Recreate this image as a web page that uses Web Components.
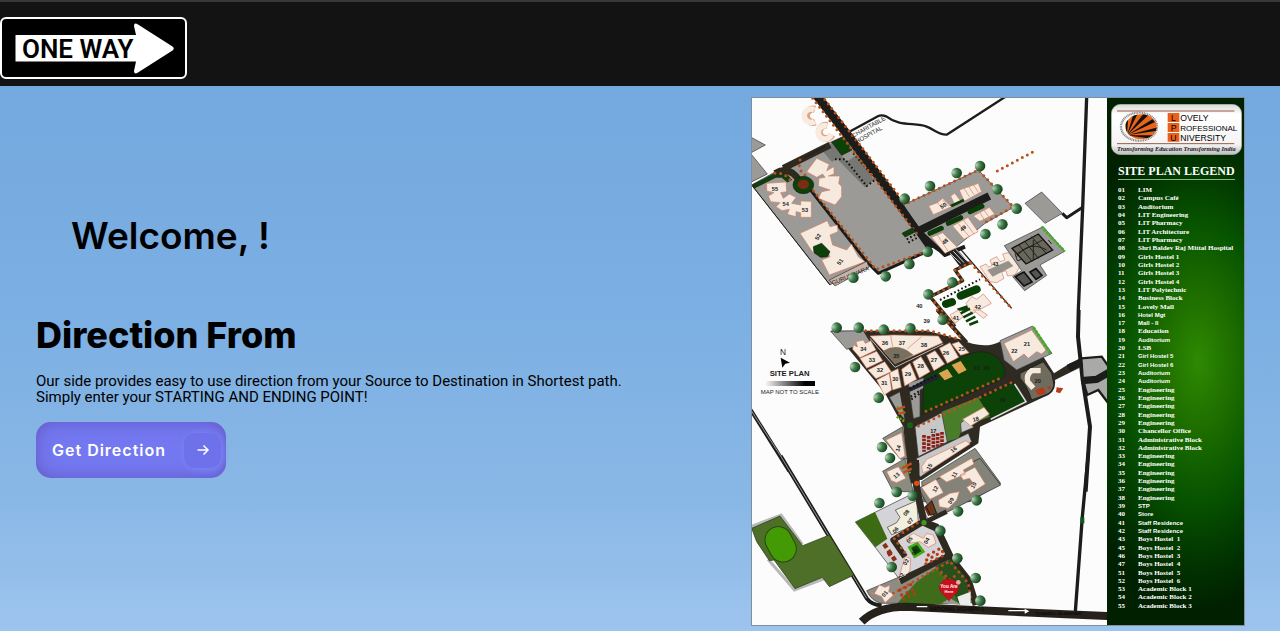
<!DOCTYPE html>
<html lang="en">
<head>
<meta charset="utf-8">
<meta name="viewport" content="width=device-width, initial-scale=1">
<title>Get Direction</title>
<style>
  html { min-height: 100%; background: #7db0e4; }
  body {
    margin: 0; min-height: 100vh; font-family: Inter, "Liberation Sans", sans-serif; color: #000;
    background: linear-gradient(#74a9df 86px, #7cafe3 50%, #8ab8e6 80%, #9dc4ee);
  }
</style>
</head>
<body>
<direction-app></direction-app>

<template id="t-app">
  <style>
    :host { display: block; }
    main { display: grid; grid-template-columns: minmax(0, 1fr) auto; padding: 11px 35px 5px 36px; column-gap: 36px; }
    .intro { padding-top: 117px; }
    h1 { margin: 0 0 55px 35px; font-size: 37px; line-height: 44px; font-weight: 600; }
    h2 { margin: 0 0 16px; font-size: 36px; line-height: 44px; font-weight: 800; }
    p { margin: 0 0 17px; font: 15px/16px Roboto, "Liberation Sans", sans-serif; }
    .plan { display: flex; outline: 1px solid #7d8f9c; outline-offset: -1px; }
  </style>
  <site-header><one-way-sign></one-way-sign></site-header>
  <main>
    <section class="intro">
      <h1>Welcome, !</h1>
      <h2>Direction From</h2>
      <p>Our side provides easy to use direction from your Source to Destination in Shortest path.<br>Simply enter your STARTING AND ENDING POINT!</p>
      <arrow-button>Get Direction</arrow-button>
    </section>
    <section class="plan">
      <campus-map></campus-map>
      <map-legend><university-card slot="logo"></university-card>SITE PLAN LEGEND</map-legend>
    </section>
  </main>
</template>

<template id="t-header">
  <style>
    :host { display: block; box-sizing: border-box; background: #131313; border-top: 2px solid #383838; padding: 15px 0 7px; }
    header { display: flex; }
  </style>
  <header><slot></slot></header>
</template>

<template id="t-sign">
  <style>
    :host { display: block; }
    a, svg { display: block; }
    text { font: 600 26px Roboto, "Liberation Sans", sans-serif; }
  </style>
  <a href="#" aria-label="Home">
    <svg width="187" height="62" viewBox="0 0 187 62">
      <rect x="1" y="1" width="185" height="60" rx="5" fill="#000" stroke="#fff" stroke-width="2"/>
      <path d="M15.5 18H136L134 9Q134 5 138 7.5L172.500 29.5Q175 31.5 172.5 33.5L138 55.5Q134 58 134 54L136 44.5H15.5Z" fill="#fff"/>
      <text x="22" y="41" fill="#000">ONE WAY</text>
    </svg>
  </a>
</template>

<template id="t-button">
  <style>
    :host { display: block; }
    button {
      display: flex; align-items: center; gap: 18px; height: 56px; padding: 0 5px 0 16px; border: 0; border-radius: 15px;
      background: #7378f0; box-shadow: inset 0 0 20px -4px #5f4bb0; color: #fff; cursor: pointer;
      font: 600 16px/24px Inter, "Liberation Sans", sans-serif; letter-spacing: 1px;
    }
    .icon {
      display: grid; place-items: center; width: 37px; height: 35px; border-radius: 11px;
      background: #6e72ea; box-shadow: 1px 1px 6px 1px #7b83f4;
    }
  </style>
  <button type="button"><slot></slot>
    <span class="icon"><svg width="14" height="14" viewBox="0 0 14 14" fill="none" stroke="#fff" stroke-width="1.5"><path d="M1.5 7H12M7.5 2.5L12 7L7.5 11.5"/></svg></span>
  </button>
</template>

<template id="t-card">
  <style>
    :host { display: block; }
    svg { display: block; width: 100%; }
    .name { font: 26px "Liberation Sans", sans-serif; }
    .small { font-size: 24px; }
    .motto { font: italic bold 19px "Liberation Serif", serif; fill: #222; }
  </style>
  <svg viewBox="0 0 393 153">
    <defs>
      <linearGradient id="card" x2="0" y2="1"><stop stop-color="#d8d8d8"/><stop offset=".2" stop-color="#fff"/><stop offset=".8" stop-color="#f4f4f4"/><stop offset="1" stop-color="#bdbdbd"/></linearGradient>
      <clipPath id="ball"><ellipse cx="90" cy="68" rx="47" ry="37"/></clipPath>
    </defs>
    <rect x="1" y="1" width="391" height="151" rx="28" fill="url(#card)" stroke="#aaa" stroke-width="2"/>
    <path d="M18 21H370M18 119H370" stroke="#9b5844" stroke-width="3"/>
    <ellipse cx="84" cy="68" rx="54" ry="42" fill="none" stroke="#888" stroke-width="7" stroke-dasharray="3 2"/>
    <g clip-path="url(#ball)"><path fill="#ec6418" d="M40 25H150V110H40Z"/>
      <path fill="#111" d="M48 94L36 76V66ZM48 94L40 45L52 36ZM48 94L68 28L82 25ZM48 94L100 26L112 34ZM48 94L124 46L132 54ZM48 94L140 70V80ZM48 94L132 94L120 104Z"/></g>
    <path fill="#e9601b" d="M170 27H205V54H170ZM170 57H205V84H170ZM170 87H205V113H170Z"/>
    <g class="name"><text x="180" y="50">L</text><text x="179" y="80">P</text><text x="178" y="110">U</text>
      <text x="208" y="50">OVELY</text><text class="small" x="208" y="80">ROFESSIONAL</text><text x="208" y="110">NIVERSITY</text></g>
    <text class="motto" x="18" y="140">Transforming Education Transforming India</text>
  </svg>
</template>

<template id="t-legend">
  <style>
    :host {
      display: block; box-sizing: border-box; width: 138px; padding: 7px 3px 16px 4px; color: #fff;
      background: radial-gradient(ellipse 130px 250px at 66% 50%, #2e8a02, #1f7000 25%, #075400 55%, #013500 80%, #002000);
      font: bold 7px/8px "Liberation Serif", serif;
    }
    h3 { margin: 8px 7px 6px; font: bold 12px/16px "Liberation Serif", serif; border-bottom: 1px solid #8fb38b; white-space: nowrap; }
    table { display: flex; flex-direction: column; height: 424px; margin: 0 0 0 7px; }
    tbody { display: flex; flex-direction: column; flex: 1; }
    tr { display: grid; grid-template-columns: 20px 1fr; flex: 1; align-items: center; }
    th, td { padding: 0; text-align: left; white-space: pre; }
    .sans { font-family: "Liberation Sans", sans-serif; font-size: 6px; }
  </style>
  <slot name="logo"></slot>
  <h3><slot></slot></h3>
  <table><tbody></tbody></table>
</template>

<template id="t-map">
  <style>
    :host { display: block; background: #fcfcfc; }
    svg { display: block; width: 356px; height: 529px; }
    text { font: bold 18px "Liberation Sans", sans-serif; fill: #1b1b1b; }
    .n { font-size: 17px; text-anchor: middle; }
    .b { fill: #f6eadf; stroke: #d67b62; stroke-width: 2; }
    .r { fill: none; stroke: #1c1c1a; stroke-linejoin: round; }
    .br { fill: none; stroke: #2f2a20; stroke-linejoin: round; }
    .g { fill: #9b9a97; stroke: #333; stroke-width: 2; }
    .k { fill: #0c4208; stroke: #1b1b1b; stroke-width: 2; }
    .d { fill: none; stroke: #b9511c; stroke-width: 9; stroke-linecap: round; stroke-dasharray: 0 17; }
    .s { fill: none; stroke: #111; stroke-width: 6; stroke-dasharray: 5 7; }
    .c { fill: none; stroke: #d67b62; stroke-width: 2; }
  </style>
  <svg viewBox="0 0 1068 1587" role="img" aria-label="Campus site plan">
    <defs>
      <radialGradient id="leaf" cx=".15" cy=".4" r=".85"><stop stop-color="#b9d6bd"/><stop offset=".5" stop-color="#3f7a49"/><stop offset="1" stop-color="#123f1b"/></radialGradient>
      <linearGradient id="fade"><stop stop-color="#fcfcfc"/><stop offset=".8" stop-color="#000"/></linearGradient>
    </defs>

    <!-- north-west campus -->
    <g transform="translate(-3 -21)">
      <path class="g" d="M0 140L46 165L0 190ZM0 188L52 252L0 278Z"/>
      <path class="r" stroke-width="7" d="M290 130L385 78Q395 73 410 80C450 112 500 95 530 110C555 120 565 135 590 134L765 21"/>
      <path class="g" d="M5 285L130 215L245 155L290 135L505 420L540 480L385 550L350 512L240 585Z"/>
      <path fill="#777773" d="M215 180L245 160L290 215L320 195L372 270L345 292L262 208L245 215Z"/>
      <path class="s" d="M255 208L285 208L350 288L375 270M310 190L375 265"/>
      <path class="k" d="M245 157L280 140L306 180L275 196ZM8 284L75 250H108L125 270L112 276L95 262H78L12 295Z"/>
      <path class="br" stroke-width="20" d="M75 250Q120 225 150 275M100 235L240 165"/>
      <path class="r" stroke-width="3" d="M160 205L225 170M5 285L240 585"/>
      <path class="r" stroke-width="9" d="M170 285L350 515L385 550L530 485"/>
      <path class="d" d="M75 250Q100 245 120 270M150 210Q142 240 165 255M180 290L378 538L525 485"/>
      <ellipse class="k" cx="160" cy="285" rx="31" ry="26"/><ellipse cx="160" cy="283" rx="17" ry="14" fill="#7e2b16"/>
      <path class="b" d="M170 245L200 205L238 223L230 242L252 230V252L235 258L270 258L266 280L275 290V320L255 345L205 325L215 305L240 300L205 288L207 265L225 262L218 252L200 262Z"/>
      <path class="b" d="M50 280L108 276L110 305L92 308L100 325L118 312L138 322L125 340L152 345V333L184 334V382H152V368L138 365V380L112 373L118 358L96 362L78 350L90 338L62 335L55 318L72 308L50 303Z"/>
      <path class="b" d="M150 430L232 392L240 410L262 405L264 425L240 435L248 465L290 480L304 462L325 500L345 515L238 555L215 510L240 500L225 470L190 490Z"/>
      <path class="k" d="M190 470L215 460L240 485L232 500L212 502L192 488Z"/>
      <path fill="#c9b3a8" stroke="#333" stroke-width="2" d="M238 570L350 514L357 532L255 588Z"/>
      <g fill="none" stroke="#dfa384" stroke-width="21"><path d="M195 58A20 20 0 1 0 196 96M232 106A20 20 0 1 0 246 134"/></g>
      <g fill="none" stroke="#f8ebdf" stroke-width="17"><path d="M193 60A20 20 0 1 0 194 94M231 108A20 20 0 1 0 244 132"/></g>
      <path class="r" stroke-width="26" d="M195 10L295 138L510 425L545 475"/>
      <path class="d" d="M188 25L508 440M214 15L530 425"/>
      <path class="k" d="M456 430L488 413L497 425L465 441Z"/><path class="s" stroke-width="3" d="M470 448L500 432M475 458L500 444"/>
      <text transform="translate(310 143) rotate(-29)" style="font-weight:400">CHARITABLE</text>
      <text transform="translate(321 161) rotate(-29)" style="font-weight:400">HOSPITAL</text>
      <text transform="translate(248 585) rotate(-22)" style="font-weight:400">GURUDWARA</text>
    </g>

    <!-- hostels and pitches, north-east -->
    <g transform="translate(447 -21)">
      <path class="g" d="M10 345L235 240L340 352L255 400L145 490L80 450Z"/>
      <path class="d" d="M10 345L235 240L340 350L250 400M292 243L402 184"/>
      <path class="r" stroke-width="24" d="M52 425L268 318"/>
      <path class="r" stroke-width="12" d="M0 340L60 425L135 495L195 470M75 450L140 495"/>
      <path class="b" d="M86 348L112 338L128 325L150 347L165 345L152 318L164 310L180 330L190 328L178 300L235 280L245 305L190 335L150 352L100 374Z"/>
      <path class="b" d="M220 378L268 352L284 372L240 394ZM95 442L128 428L172 472L135 490ZM158 408L204 382L234 425L192 448Z"/>
      <path class="c" d="M112 338L130 358M128 330L146 350M192 295L208 320M206 290L222 314M220 284L236 308M112 435L145 485M174 400L208 440M190 390L222 432M240 368L252 388M252 360L266 380"/>
      <g stroke="#0b3c08" stroke-width="15" stroke-linecap="round"><path d="M90 430L124 415M145 400L182 383M210 365L246 349"/></g>
      <path fill="#0b3c08" d="M150 345L190 326L194 334L156 352Z"/>
      <path fill="#222" d="M148 488L170 476L206 518L180 530Z"/><path stroke="#ddd" stroke-width="3" d="M150 490L182 520M160 484L192 518M168 478L200 512"/>
      <path class="r" stroke-width="4" d="M182 478L335 655"/><path class="d" d="M213 520L335 655"/>
      <path class="b" d="M240 530L258 522L266 532L276 526L270 510L290 500L300 515L315 510L308 492L325 488L360 528L345 555L322 558L318 542L305 546L312 565L290 578L270 575Z"/>
      <path fill="#96928a" d="M262 540L325 512L340 528L278 560Z"/>
      <path class="g" d="M375 340L425 306L487 370L435 400ZM313 467L430 410L494 484L420 525L440 556L374 602L338 560L365 542Z"/>
      <path fill="#68675a" stroke="#111" stroke-width="4" d="M336 475L415 432L458 480L378 522Z"/>
      <path fill="none" stroke="#222" stroke-width="3" d="M348 492L428 450M375 455L415 505M356 464L396 514M350 500Q385 450 440 480M395 440L438 490M400 510L400 450M345 490L352 512L366 508M445 450L455 462"/>
      <path fill="#555" stroke="#111" stroke-width="5" d="M346 560L372 546L396 576L372 588ZM390 546L408 536L426 556L408 568Z"/>
      <path stroke="#3fae20" stroke-width="8" stroke-dasharray="8 3" d="M424 410L494 484"/>
      <path class="r" stroke-width="9" d="M487 370L500 383L548 352"/><path class="r" stroke-width="10" d="M560 21L548 352L535 660"/>
      <path class="br" stroke-width="10" d="M210 518L165 540L188 572L90 620L165 710"/><path class="d" d="M210 518L165 540L188 572L90 620L165 710"/>
      <path class="s" d="M120 630L240 568"/>
      <g fill="none" stroke="#0b3f08" stroke-linecap="round"><path stroke-width="24" d="M138 642L156 636M182 617L230 598"/></g>
      <path fill="#0b3f08" d="M170 656L205 644V662H176Z"/>
      <path class="b" d="M198 640L215 620L230 628L250 612L274 640L215 672Z"/>
    </g>

    <!-- triangular academic quarter -->
    <g transform="translate(297 639)">
      <path class="r" stroke-width="12" d="M686 0L684 80L698 210L720 350L707 545"/>
      <path class="br" stroke-width="12" d="M262 0L325 70L350 98"/><path class="d" d="M262 0L330 80"/>
      <path class="b" d="M300 15L325 0L340 20L315 40ZM370 0H390L412 15L400 25Z"/>
      <g stroke="#0b3f08" stroke-width="8"><path d="M332 10L360 -4M340 22L368 8M348 34L376 20M358 44L384 34"/></g>
      <path fill="#2f2b22" d="M-58 62H230L330 88Q400 120 450 95L500 165L580 140L612 190L660 160L690 150L692 172L615 210Q620 250 580 262L390 350L385 400L215 510L175 508L160 350L105 250L-10 110Z"/>
      <path class="g" d="M-58 64L40 62L60 95L-10 118ZM118 262L150 245L165 330L140 300ZM175 220L270 185L290 200L210 240V320L190 326Z"/>
      <path class="b" d="M60 78L130 75L265 78L278 98L195 135L135 160Z"/>
      <path fill="#77705f" stroke="#d67b62" d="M100 122Q145 95 190 135L135 162Z"/>
      <path class="c" d="M122 76L128 110M215 80L172 116"/>
      <path fill="none" stroke="#bbb" stroke-width="3" d="M60 85L135 172L280 102"/>
      <path class="b" d="M10 105L22 110L18 95L40 90L46 100L62 92L78 120L30 143L8 118ZM30 145L80 124L98 152L50 175ZM54 180L104 155L124 185L78 206ZM80 210L118 190L125 240L103 255ZM119 188L144 176L154 232L128 240ZM155 178L180 160L200 208L164 228ZM188 156L213 140L240 185L208 204ZM230 136L255 122L284 162L252 182ZM268 115L300 98L326 142L292 160ZM306 102L326 95L357 128L332 136Z"/>
      <path class="k" d="M222 200L330 145Q385 115 420 130Q450 140 466 182Q465 205 445 212L218 314Z"/>
      <path fill="#dca451" d="M266 190L292 177L308 200L284 211ZM305 165L332 153L350 180L326 192Z"/>
      <path fill="#223" d="M170 238L262 190L268 205L180 245Z"/><path class="s" stroke-width="4" d="M178 235L262 195M182 260L210 242M184 268L210 250"/>
      <path class="k" d="M386 265L488 218L530 275L420 325Z"/><path fill="none" stroke="#ddd" stroke-width="5" d="M494 222L528 275L422 328"/>
      <path fill="#4a7d29" d="M275 305L384 262L420 320L340 350L325 385L290 395Z"/>
      <path fill="#c8c7c8" stroke="#333" stroke-width="2" d="M195 350L275 308L292 396L205 440ZM332 340L345 328L372 352L334 368ZM200 445L355 370L365 395L212 500L196 492Z"/>
      <path class="b" d="M338 328L402 292L418 312L362 348ZM215 470L230 448L348 392L360 402L240 480L218 488Z"/>
      <path stroke="#8c1f16" stroke-width="11" stroke-dasharray="8 3" d="M222 375V425M236 378V422M250 372V416M263 370V410M276 366V405"/>
      <path class="g" d="M450 92L548 48L606 130L500 180L462 150Z"/>
      <path class="b" d="M462 100L545 60L588 120L575 132L560 125L535 145L522 132L490 155Z"/>
      <path stroke="#3fae20" stroke-width="9" stroke-dasharray="9 3" d="M550 52L602 132"/>
      <path fill="#6f6b5d" stroke="#222" stroke-width="3" d="M510 190L580 155L605 190L612 225Q605 250 585 255L545 270Q530 225 510 205Z"/>
      <path fill="none" stroke="#f6eadf" stroke-width="16" d="M572 182L545 182Q528 195 533 215L550 235"/>
      <path fill="#b83a1a" d="M555 240L580 232L588 250L565 256ZM590 230L602 228L600 240ZM620 232L640 235L630 250L618 246Z"/>
      <path class="d" d="M228 304L450 205M190 355L490 215M30 62H240L320 85"/>
      <path fill="#a9a9a8" stroke="#1c1c1a" stroke-width="7" d="M694 145L755 140L790 190V300L745 240L712 255L706 235L698 205Z"/><path class="r" stroke-width="22" d="M694 212L740 208L790 180M655 175L694 155"/>
      <path class="br" stroke-width="24" d="M160 235L182 350L190 520"/>
      <path fill="#8b8b7f" stroke="#333" stroke-width="2" d="M98 385L158 350L172 445L152 448ZM98 484L165 446L190 545L130 545ZM215 515L375 415L452 520L360 575H220Z"/>
      <path class="b" d="M108 390L155 368L165 438L150 446ZM110 485L145 470L168 505L140 518L124 512ZM268 500L368 448L374 465L340 480L348 492L290 515ZM330 495L375 475L405 525L360 542ZM220 535L265 508L285 545H225Z"/>
      <path stroke="#68a818" stroke-width="8" stroke-dasharray="6 4" d="M140 290L165 310M140 320L165 335M160 462L180 490"/>
      <path stroke="#c64b20" stroke-width="7" d="M140 298L165 290M145 312L165 306M155 475L185 460M160 488L185 476"/>
      <circle cx="180" cy="346" r="9" fill="#146314"/>
    </g>

    <!-- compass and scale -->
    <g transform="translate(-3 639)">
      <text x="90" y="134" style="font-weight:400;font-size:25px">N</text>
      <path d="M92 143L120 158L106 161L97 173Z"/>
      <text x="59" y="199" style="font-size:23px">SITE PLAN</text>
      <path fill="url(#fade)" d="M45 213H195V228H45Z"/>
      <text x="32" y="252" style="font-weight:400;font-size:18px">MAP NOT TO SCALE</text>
      <path class="r" stroke-width="11" d="M0 296L118 484"/>
    </g>

    <!-- stadium and southern gate -->
    <g transform="translate(-3 1089)">
      <path class="r" stroke-width="12" d="M92 -12L235 225L350 415Q365 435 395 436"/><path fill="none" stroke="#999" stroke-width="3" d="M0 -154L92 -12L235 225L350 415"/>
      <path fill="#b8b8b8" d="M0 196L95 160L160 250L148 262L90 172L8 206ZM50 300L132 395L225 360L215 350L135 385L60 298Z"/>
      <path fill="#4d6f27" stroke="#26341a" stroke-width="2" d="M5 205L90 168L158 257L238 225L312 345L238 380L217 352L135 386L72 300L58 302L20 245Z"/>
      <rect x="52" y="198" width="80" height="110" rx="40" transform="rotate(-28 92 253)" fill="#439a05" stroke="#234b0d" stroke-width="3"/>
      <path fill="#d4d4d8" stroke="#333" stroke-width="2" d="M316 186L500 95L530 170L590 245L600 290L450 360L378 265Z"/>
      <path fill="#3d6b13" d="M316 186L375 156L412 236L376 262Z"/>
      <path fill="#f3efdf" stroke="#333" stroke-width="2" d="M436 150L500 122L505 185L460 210L425 224L412 202L440 188L450 172Z"/>
      <path fill="#8e8b83" stroke="#333" stroke-width="2" d="M350 392L450 350L590 290L600 380V430H395Q365 425 350 392Z"/>
      <path fill="#3f6c1b" d="M500 365L556 325L650 390V432H440Z"/>
      <path class="b" d="M358 395L372 402L388 375L405 382L420 376L416 395L434 402L405 428L395 410ZM465 290L482 296L480 330L458 370L445 362L456 320ZM468 235L490 220L520 235L530 220L550 225L558 250L535 262L510 245L478 250Z"/>
      <path fill="#0b4508" stroke="#49a61c" stroke-width="8" d="M478 262L502 250L520 275L494 290Z"/>
      <path class="br" stroke-width="18" d="M498 0L500 90L520 185L430 240L465 290M520 185L560 200L600 285L450 365"/>
      <path class="d" d="M505 95L515 180L432 235L470 285M430 400L560 325L600 370"/>
      <path fill="none" stroke="#b33d12" stroke-width="10" stroke-linecap="round" stroke-dasharray="0 18" d="M530 300L590 268M528 312L592 282M535 285L580 260M450 390L490 370M455 405L500 385M460 415L500 400"/>
      <path stroke="#8d2f14" stroke-width="13" stroke-dasharray="14 9" d="M402 252L438 305M415 275L425 292"/>
      <path class="b" d="M515 82L558 60L582 98L540 118Z"/>
      <path fill="#6f3015" stroke="#222" d="M522 142L545 122L558 155L535 168Z"/>
    </g>

    <!-- highway and entrance -->
    <g transform="translate(447 1089)">
      <path class="r" stroke-width="10" d="M565 -20L547 170L526 455"/><path stroke="#0d5a1c" stroke-width="12" d="M547 172V190"/>
      <path fill="#83837a" stroke="#222" stroke-width="2" d="M55 85L240 -5L302 75L105 175Z"/>
      <path class="b" d="M65 82L108 58L130 98L90 118ZM118 50L215 -5L222 12L190 30L196 42L140 66ZM180 45L225 22L256 72L212 100L200 82L220 70L208 55L190 60ZM115 120L150 100L178 95L170 120L145 145L118 140Z"/>
      <path fill="#6d3418" stroke="#1a1a1a" stroke-width="3" d="M78 140L95 122L110 160L92 166Z"/>
      <path class="br" stroke-width="20" d="M48 10V70L72 188L110 205L150 290L205 360L228 435"/>
      <path class="br" stroke-width="14" d="M72 188L140 155M150 290L20 350"/>
      <path fill="#28501c" d="M105 320L150 298L195 350L216 430H175L150 370Z"/>
      <path class="d" d="M112 325L150 304L205 370L212 420M112 325L150 360L175 340"/>
      <path fill="#ececec" d="M172 410L212 395V436H180Z"/><path fill="#999" d="M125 430L150 415L185 435Z"/>
      <circle cx="50" cy="70" r="8" fill="#e24d12"/><circle cx="72" cy="188" r="8" fill="#3d9a1c"/>
      <path fill="none" stroke="#26211a" stroke-width="24" d="M-115 485Q-70 440 20 440L220 450L480 462L630 468"/>
      <path stroke="#fff" stroke-width="4" d="M50 440H82M325 452H380"/><path fill="#fff" d="M374 446L388 454L374 461Z"/>
      <text x="90" y="454" style="font-size:15px;fill:#0c0c0c">NATIONAL HIGHWAY-1</text>
      <text x="405" y="466" style="font-size:12px;fill:#0c0c0c">TOWARDS JALANDHAR</text>
      <path fill="#c90f1c" stroke="#8c0b13" d="M147 424C138 405 118 402 118 382A29 25 0 0 1 176 382C176 402 156 405 147 424Z"/>
      <circle cx="175" cy="367" r="7" fill="#f6a2ad"/>
      <text class="n" x="147" y="383" style="font-size:14px;fill:#fff">You Are</text><text class="n" x="147" y="398" style="font-size:12px;fill:#fff">Here</text>
    </g>
    <g id="trees"></g>
    <g id="labels"></g>
  </svg>
</template>

<script>
  const define = (tag, id, setup) => customElements.define(tag, class extends HTMLElement {
    constructor() {
      super();
      const root = this.attachShadow({ mode: 'open' });
      root.append(document.getElementById(id).content.cloneNode(true));
      if (setup) setup(root);
    }
  });

  define('site-header', 't-header');
  define('one-way-sign', 't-sign');
  define('arrow-button', 't-button');
  define('university-card', 't-card');

  const legend = `01|LIM;02|Campus Café;03|Auditorium;04|LIT Engineering;05|LIT Pharmacy;06|LIT Architecture;07|LIT Pharmacy;08|Shri Baldev Raj Mittal Hospital;09|Girls Hostel 1;10|Girls Hostel 2;11|Girls Hostel 3;12|Girls Hostel 4;13|LIT Polytechnic;14|Business Block;15|Lovely Mall;16|Hotel Mgt|s;17|Mall - II|s;18|Education;19|Auditorium|s;20|LSB;21|Girl Hostel 5|s;22|Girl Hostel 6|s;23|Auditorium|s;24|Auditorium|s;25|Engineering;26|Engineering;27|Engineering;28|Engineering;29|Engineering;30|Chancellor Office;31|Administrative Block;32|Administrative Block;33|Engineering;34|Engineering;35|Engineering;36|Engineering;37|Engineering;38|Engineering;39|STP|s;40|Store|s;41|Staff Residence|s;42|Staff Residence|s;43|Boys Hostel  1;45|Boys Hostel  2;46|Boys Hostel  3;47|Boys Hostel  4;51|Boys Hostel  5;52|Boys Hostel  6;53|Academic Block 1;54|Academic Block 2;55|Academic Block 3`
    .split(';').map(row => row.split('|'));

  define('map-legend', 't-legend', root => {
    root.querySelector('tbody').innerHTML = legend.map(([no, name, sans]) =>
      `<tr><th scope="row">${no}</th><td${sans ? ' class="sans"' : ''}>${name}</td></tr>`).join('');
  });

  // Tree positions in plan units (three to a CSS pixel).
  const trees = [[461,305],[537,267],[617,228],[687,207],[739,277],[797,335],[754,382],[703,411],[530,464],[475,501],[404,538],[307,542],
    [604,556],[532,592],[257,692],[323,692],[398,698],[478,694],[575,668],[312,810],[383,902],[393,1050],[417,1083],[385,1218],[437,1185],[485,1196],
    [621,1243],[677,1210],[568,1301],[619,1384],[674,1443],[688,1511],[422,1410]];
  // Building numbers: text, x, y, rotation.
  const labels = [['55',72,277,0],['54',104,322,0],['53',162,340,0],['52',206,416,-60],['51',272,492,-55],['50',580,325,-30],['49',640,392,-40],['48',586,432,-40],
    ['43',733,502,0],['41',615,662,0],['42',680,630,0],['40',505,626,0],['39',527,671,0],['34',337,757,0],['33',363,790,0],['32',387,820,0],['31',400,859,0],['30',433,847,0],
    ['29',471,832,0],['28',509,807,0],['27',549,789,0],['26',585,767,0],['25',632,757,0],['36',402,739,0],['37',453,738,0],['38',519,744,0],['35',436,776,0],
    ['23',677,814,0],['24',706,814,0],['21',828,740,0],['22',790,762,0],['20',860,852,0],['19',754,908,0],['18',676,966,-15],['17',547,1002,0],['16',612,1056,-40],['15',540,1106,-60],
    ['14',447,1050,-70],['13',440,1134,-40],['12',558,1173,-60],['11',615,1130,-60],['10',673,1162,-60],['09',605,1208,-60],['08',470,1245,-50],['07',482,1270,-50],['06',438,1297,-50],
    ['05',480,1326,-50],['04',532,1328,-60],['03',496,1362,-60],['02',470,1392,-60],['02',456,1434,-60],['01',406,1488,-50]];

  define('campus-map', 't-map', root => {
    root.getElementById('trees').innerHTML = trees.map(([x, y]) =>
      `<circle cx="${x}" cy="${y}" r="16" fill="url(#leaf)"/>`).join('');
    root.getElementById('labels').innerHTML = labels.map(([n, x, y, a]) =>
      `<text class="n" transform="translate(${x} ${y + 6}) rotate(${a})">${n}</text>`).join('');
  });

  define('direction-app', 't-app');
</script>
</body>
</html>
